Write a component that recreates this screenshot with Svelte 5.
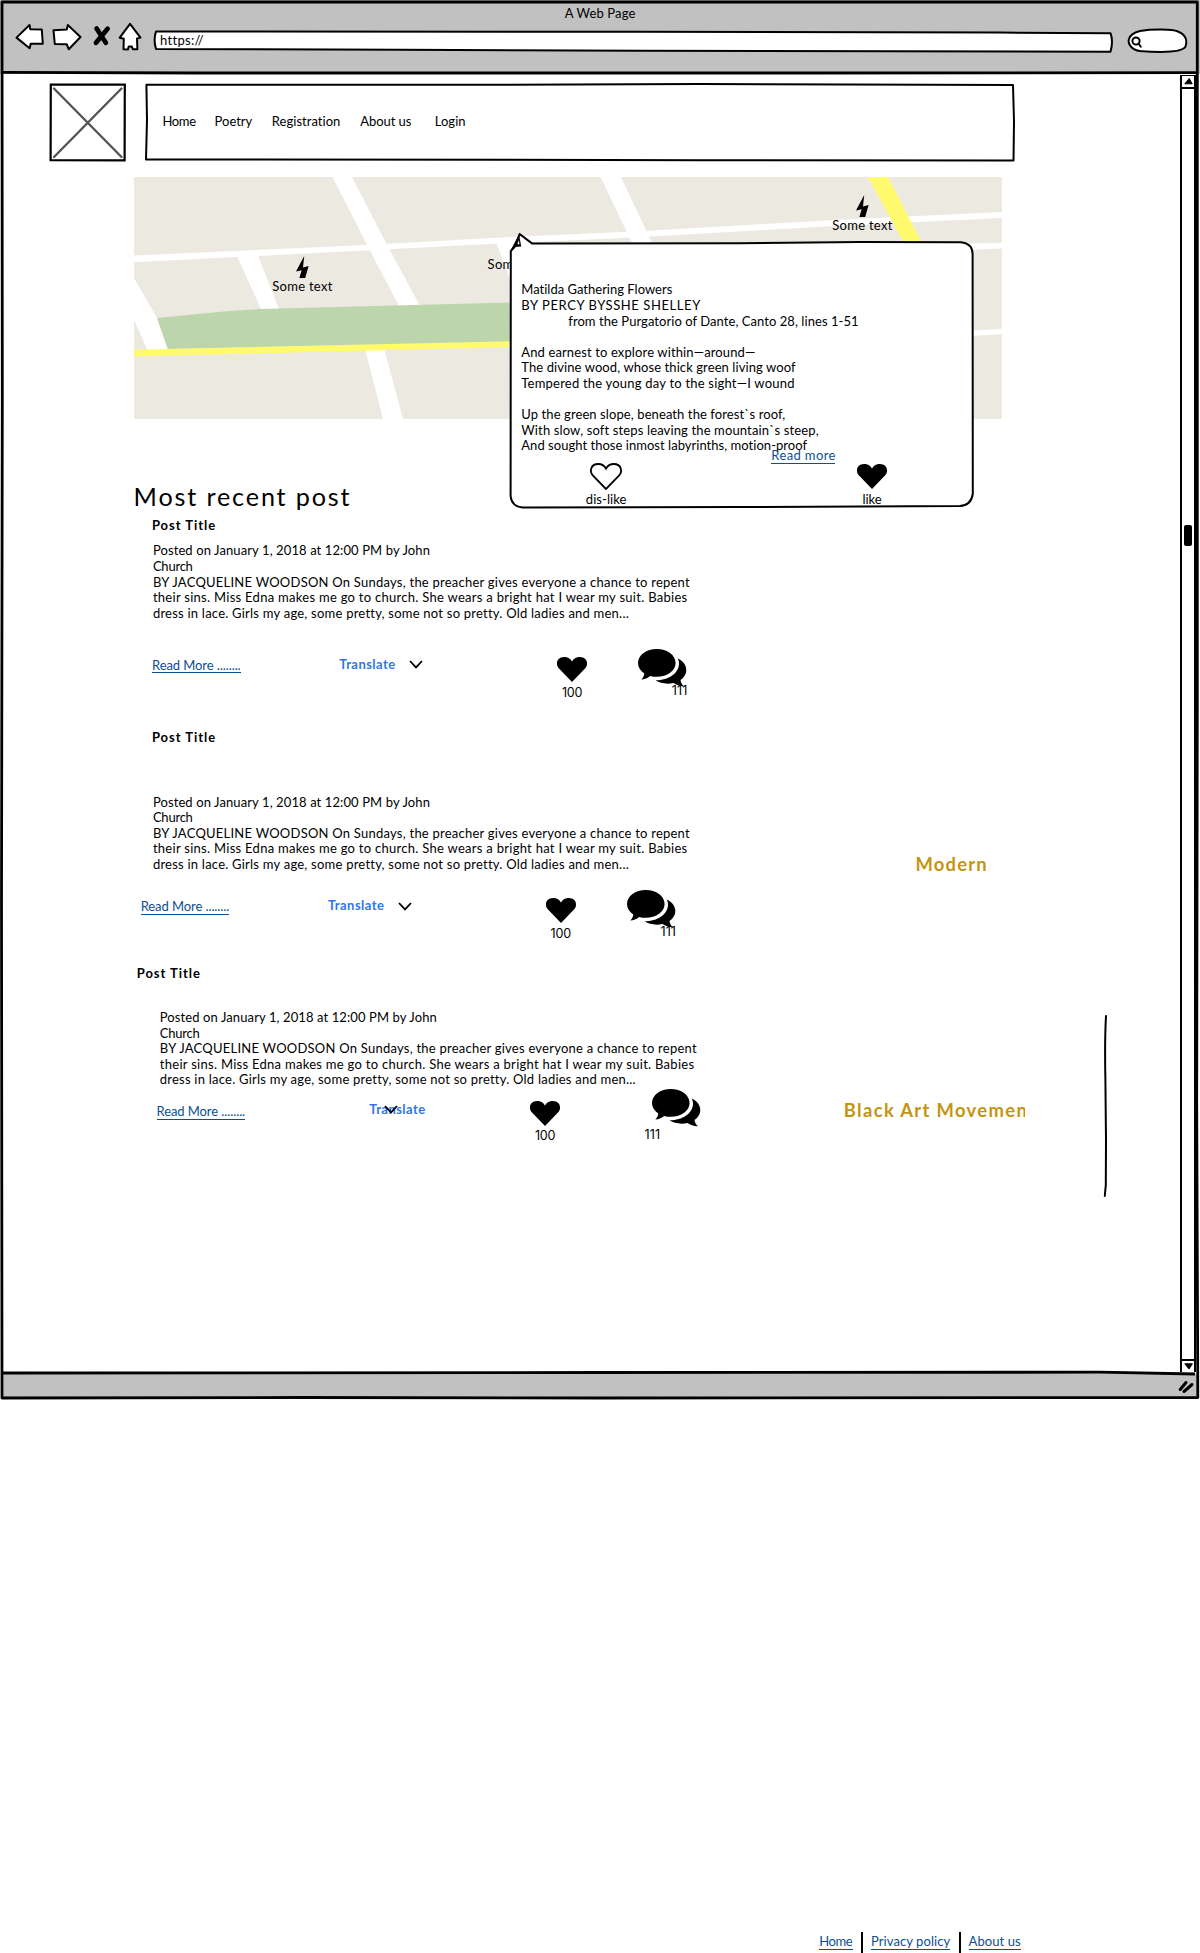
<script>
  const nav = [
    ['Home', 33.7, 'home'],
    ['Poetry', 37.7, 'poetry'],
    ['Registration', 68.7, 'registration'],
    ['About us', 51.3, 'about'],
    ['Login', 30.7, 'login'],
  ];

  const body = [
    ['Posted on January 1, 2018 at 12:00 PM by John', 277],
    ['Church', 40],
    ['BY JACQUELINE WOODSON On Sundays, the preacher gives everyone a chance to repent', 536.8],
    ['their sins. Miss Edna makes me go to church. She wears a bright hat I wear my suit. Babies', 534.3],
    ['dress in lace. Girls my age, some pretty, some not so pretty. Old ladies and men...', 475],
  ];
  const posts = ['first', 'second', 'third'];

  const poem = [
    ['Matilda Gathering Flowers', 151.2],
    ['BY PERCY BYSSHE SHELLEY', 179],
    ['from the Purgatorio of Dante, Canto 28, lines 1-51', 290.3, true],
    null,
    ['And earnest to explore within—around—', 234],
    ['The divine wood, whose thick green living woof', 274.3],
    ['Tempered the young day to the sight—I wound', 273.2],
    null,
    ['Up the green slope, beneath the forest`s roof,', 264],
    ['With slow, soft steps leaving the mountain`s steep,', 297],
    ['And sought those inmost labyrinths, motion-proof', 286],
  ];

  // Tracks a single line of text out (or in) so it spans the given width.
  function fit(node, width) {
    const natural = node.getBoundingClientRect().width;
    const gaps = node.textContent.length - 1;
    node.style.letterSpacing = `${(width - natural) / gaps}px`;
    node.style.width = `${width}px`;
  }
</script>

{#snippet line(text, width)}<span class="fit" use:fit={width}>{text}</span>{/snippet}

{#snippet heart(hollow)}
  <svg class="heart" class:hollow viewBox="0 0 32 27" width="32" height="27">
    <path d="M16 26 L3 12.6 C-.6 9 .2 1 8.3 1 C12.5 1 14.6 3.2 16 5.6 C17.4 3.2 19.5 1 23.7 1 C31.8 1 32.6 9 29 12.6Z" />
  </svg>
{/snippet}

{#snippet bolt()}
  <svg class="bolt" viewBox="0 0 13 22" width="13" height="22">
    <path d="M8.2 0 L0 15.6 L5.6 14.2 L3.4 22 L9.2 22 L12.6 10 L7 11.4Z" />
  </svg>
{/snippet}

<div class="browser">
  <header class="chrome">
    <div class="title">{@render line('A Web Page', 70.6)}</div>
    <div class="toolbar">
      <svg class="ink back" viewBox="15 22 30 32" width="30" height="32">
        <path d="M16.5 37.6 L29.5 25 L30.3 29.2 L41.8 29.5 L42.8 43.8 L30.7 43.7 L29.6 48.2Z" />
      </svg>
      <svg class="ink forward" viewBox="52 22 30 32" width="30" height="32">
        <path d="M53.5 30.3 L66.8 29.5 L67.8 25 L80.5 37 L68.8 49.3 L66.8 44.3 L54.8 44Z" />
      </svg>
      <svg class="stop" viewBox="92 22 20 32" width="20" height="32">
        <path d="M96.6 28.5 L105.8 42.7 M107.6 28.8 L96 42.8" />
      </svg>
      <svg class="ink home-icon" viewBox="117 22 26 32" width="26" height="32">
        <path d="M130 23.8 L140.5 37.6 L137 38.5 L137.4 49.3 L132.8 49.2 L131.8 46.4 L128.8 46.4 L127.8 49.6 L123.5 49.2 L123.8 38.8 L119.6 37.8Z" />
      </svg>
      <div class="address">
        <svg class="ink" viewBox="152 22 962 32" width="962" height="32">
          <path d="M156 31.4 L640 31.8 L1000 32.6 L1110.5 33.2 Q1113.5 41 1110.5 51.7 L640 50.7 L400 49.8 L156 49 Q153.2 40 156 31.4Z" />
        </svg>
        <div class="url">{@render line('https://', 43.3)}</div>
      </div>
      <svg class="ink search" viewBox="1126 22 64 32" width="64" height="32">
        <path d="M1140 31 C1152 29 1172 29 1178 31.5 C1187 35 1187 42 1185.5 46.5 C1182 53 1160 52.5 1140 51 C1131 50 1127.5 43 1129 39 C1130 35 1134 32.5 1140 31Z" />
        <circle cx="1136" cy="41" r="3.6" />
        <path d="M1138.5 43.5 L1140.8 46.8" />
      </svg>
    </div>
  </header>

  <div class="viewport">
    <main>
      <div class="masthead">
        <svg class="logo" viewBox="49 82 78 81" width="78" height="81">
          <path class="box" d="M50.8 84.5 L124.8 84.7 L124.6 160.4 L50.6 160.2Z" />
          <path class="cross" d="M54 88.5 L121.5 157 M121.5 88.5 L54 157" />
        </svg>
        <nav>
          <svg class="ink" viewBox="145 82 871 81" width="871" height="81">
            <path d="M146.4 84.7 L500 84.8 L700 84 L1013 85 L1014 122 L1013.5 160.5 L700 160.3 L500 159.8 L146 159.5 L147 120Z" />
          </svg>
          <ul>
            {#each nav as [label, width, name]}
              <li class={name}>{@render line(label, width)}</li>
            {/each}
          </ul>
        </nav>
      </div>

      <section class="map">
        <svg viewBox="0 0 868 242" width="868" height="242">
          <rect width="868" height="242" fill="#ece9e1" />
          <path class="road" d="M0 78.5 L231 68 L376 60 L500 54.5 L700 43 L868 35 L868 41 L700 49 L500 60.5 L376 66 L231 73.5 L0 85.3Z" />
          <path class="road" d="M198.5 0 L218 0 L252 66 L286 129 L265 129 L233 68Z" />
          <path class="road" d="M103 79 L123 76 L145 132 L127 132Z" />
          <path class="road" d="M0 101 L23 141 L34 174 L14 174 L0 143Z" />
          <path class="road" d="M231 172 L250 171 L269 242 L249 242Z" />
          <path class="road" d="M362 65 L381 65 L390 110 L379 110Z" />
          <path class="road" d="M466.5 0 L487 0 L519 68 L499 68Z" />
          <path class="road" d="M800 67.5 L868 65.7 L868 71.5 L800 74Z M800 156 L868 151.7 L868 157.3 L800 161Z" />
          <path fill="#bcd5ac" d="M23 141 L90 134.5 L126 132 L400 125 L400 165 L34 172Z" />
          <path class="yellow" d="M0 172.8 L400 163.8 L400 169.5 L0 179.4Z M734 0 L754 0 L789 68 L771 68Z" />
        </svg>
        <div class="pin west">{@render bolt()}{@render line('Some text', 60)}</div>
        <div class="pin mid">{@render bolt()}{@render line('Some text', 60)}</div>
        <div class="pin east">{@render bolt()}{@render line('Some text', 60)}</div>

        <article class="callout">
          <svg viewBox="508 231 468 280" width="468" height="280">
            <path class="ink-line" d="M510.8 251 L515.4 246 L519.6 234 L532.3 243.6 L740 243.2 L860 242 L961 242.3 Q972.4 243.6 972.6 254 L972.8 494 Q971 505.5 960 506 L740 507 L523 507.6 Q511.5 506.5 510.6 496Z" />
            <path d="M514.2 247 L519 234.5 L521.2 246.5Z" />
            <path fill="#fff" d="M517.4 244 L519 240 L519.4 244.4Z" />
          </svg>
          <div class="poem">
            {#each poem as row}
              <p class:indent={row?.[2]}>{#if row}{@render line(row[0], row[1])}{/if}</p>
            {/each}
            <a class="more" href="#poem">{@render line('Read more', 64.1)}</a>
            <div class="votes">
              <div class="vote">{@render heart(true)}{@render line('dis-like', 40.6)}</div>
              <div class="vote">{@render heart(false)}{@render line('like', 19)}</div>
            </div>
          </div>
        </article>
      </section>

      <div class="columns">
        <section class="feed">
          <h1>{@render line('Most recent post', 216)}</h1>
          {#each posts as post}
            <article class="post {post}">
              <h2>{@render line('Post Title', 63.3)}</h2>
              <div class="body">
                {#each body as [text, width]}<p>{@render line(text, width)}</p>{/each}
              </div>
              <div class="actions">
                <a class="read" href="#post">{@render line('Read More ........', 88.7)}</a>
                <b class="translate">{@render line('Translate', 56)}</b>
                <svg class="chevron" viewBox="0 0 14 9" width="14" height="9">
                  <path d="M1 1 L7 7.4 L13 1" />
                </svg>
                <div class="likes">{@render heart(false)}{@render line('100', 20.6)}</div>
                <div class="comments">
                  <svg viewBox="0 0 49 38" width="49" height="38">
                    <path d="M18.8 0 C29.2 0 37.6 6.2 37.6 13.9 C37.6 21.6 29.2 27.8 18.8 27.8 C16.4 27.8 14.2 27.5 12.1 26.9 C9.5 29 6.5 30.3 3.3 30.5 C5 28.8 6 26.7 6.3 24.4 C2.3 21.8 0 18.1 0 13.9 C0 6.2 8.4 0 18.8 0Z" />
                    <path d="M39.8 9.5 C45.3 12 48.3 16.5 48.3 21 C48.3 25 46.2 28.5 42.5 31 C42.8 33.5 44 35.5 46 37.3 C42 37.5 38.5 36 35.5 34 C29 35.5 22 34.3 17.5 31.3 C30 31.5 41 24.5 41 14.5 C41 12.8 40.5 11 39.8 9.5Z" />
                  </svg>
                  <div class="count">{@render line('111', 15.5)}</div>
                </div>
              </div>
            </article>
          {/each}
        </section>

        <aside>
          <div class="tag modern">{@render line('Modern', 71)}</div>
          <div class="tag movement">{@render line('Black Art Movemen', 183)}</div>
        </aside>
        <svg class="rule" viewBox="1103 1013 6 186" width="6" height="186">
          <path d="M1106 1016 Q1104.6 1040 1105.4 1080 L1106 1140 L1105.8 1185 L1104.8 1196" />
        </svg>
      </div>
    </main>

    <div class="scrollbar">
      <svg viewBox="0 0 12 11" width="12" height="11"><path d="M2.8 7.8 L10.2 7.8 L7.2 2.5Z" /></svg>
      <div class="track"><div class="thumb"></div></div>
      <svg viewBox="0 0 12 11" width="12" height="11"><path d="M2.8 2.8 L10.4 2.8 L7 8Z" /></svg>
    </div>
  </div>

  <svg class="frame" viewBox="0 0 1200 1402" width="1200" height="1402">
    <path fill="#c1c1c1" d="M2 1373 L1100 1372.5 L1197 1374 L1197 1397.5 L2 1397.5Z" />
    <path class="line" d="M2 2 L1197.3 2 L1197.3 700 L1196.7 1100 L1197.8 1397.5 L600 1398 L300 1397.5 L2 1398 L1.5 900 L2.3 400Z" />
    <path class="line" d="M2 72.4 L200 73 L800 73 L1197 72.6" />
    <path class="line" d="M2 1373 L600 1372.5 L1100 1372.2 L1195 1374" />
    <path class="grip" d="M1180.2 1389.5 L1186 1382.5 M1184 1391.5 L1192 1384.5" />
  </svg>
</div>

<footer>
  <a href="#home">{@render line('Home', 33.4)}</a>
  <a href="#privacy">{@render line('Privacy policy', 79.3)}</a>
  <a href="#about">{@render line('About us', 52)}</a>
</footer>

<style>
  :global(body) { background: #fff; overflow: hidden; }
  :global(#app) { font: 13px/15.6px Lato, sans-serif; color: #000; }
  svg { display: block; flex: none; }
  p, h1, h2, ul { margin: 0; padding: 0; font-weight: inherit; font-size: inherit; }
  ul { list-style: none; }
  a { color: #0b4f93; text-decoration: none; border-bottom: 1px solid #0b4f93; }
  .fit { display: inline-block; white-space: pre; vertical-align: top; padding-top: 1.2px; }

  .browser { display: grid; grid-template: 74px 1328px / 1200px; height: 1402px; }
  .frame { grid-area: 1 / 1 / 3 / 2; pointer-events: none; z-index: 1; }
  .line { fill: none; stroke: #000; stroke-width: 2.8; stroke-linejoin: round; }
  .grip { stroke: #000; stroke-width: 3; stroke-linecap: round; }
  .ink, .ink-line { fill: #fff; stroke: #000; stroke-width: 2; stroke-linejoin: round; stroke-linecap: round; }

  .chrome { grid-area: 1 / 1; background: #c1c1c1; padding-top: 5px; box-sizing: border-box; }
  .title { text-align: center; height: 17px; }
  .toolbar { display: flex; padding-left: 15px; }
  .forward { margin-left: 7px; }
  .stop { margin-left: 10px; fill: none; stroke: #000; stroke-width: 4.8; stroke-linecap: round; }
  .home-icon { margin-left: 5px; }
  .address { display: grid; margin-left: 9px; }
  .address > * { grid-area: 1 / 1; }
  .url { padding: 9.9px 0 0 8px; }
  .search { margin-left: 12px; }

  .viewport { grid-area: 2 / 1; display: flex; height: 1299px; }
  main { width: 1180px; flex: none; }
  .masthead { display: flex; padding: 8px 0 0 49px; gap: 18px; }
  .logo path { fill: none; stroke-linecap: round; }
  .logo .box { stroke: #000; stroke-width: 2.2; }
  .logo .cross { stroke: #555; stroke-width: 2.4; }
  nav { display: grid; }
  nav > * { grid-area: 1 / 1; }
  nav ul { display: flex; padding: 31px 0 0 17.4px; }
  .poetry { margin-left: 18.5px; }
  .registration { margin-left: 19.6px; }
  .about { margin-left: 19.6px; }
  .login { margin-left: 23.4px; }

  .map { position: relative; width: 868px; height: 242px; margin: 14px 0 0 134px; }
  .road { fill: #fff; }
  .yellow { fill: #fffa6e; }
  .pin { position: absolute; display: flex; flex-direction: column; align-items: center; width: 60px; }
  .west { left: 138.3px; top: 78.6px; }
  .mid { left: 353.6px; top: 57px; }
  .east { left: 698.3px; top: 18px; }

  .callout { position: absolute; left: 374px; top: 54px; display: grid; z-index: 2; }
  .callout > * { grid-area: 1 / 1; }
  .poem { padding: 50.2px 0 0 13.3px; }
  .poem p { height: 15.6px; }
  .poem .indent { padding-left: 47px; }
  .more { display: block; width: 64.1px; height: 16.2px; margin: -5.8px 0 0 250px; }
  .votes { display: flex; justify-content: space-between; width: 307px; margin: -1px 0 0 64.3px; }
  .vote { display: flex; flex-direction: column; align-items: center; width: 41px; }
  .vote .fit { margin-top: .6px; }
  .hollow path { fill: none; stroke: #000; stroke-width: 1.8; }

  .columns { display: flex; }
  .feed { width: 711px; flex: none; padding-left: 134px; box-sizing: content-box; }
  h1 { font-size: 25.2px; line-height: 30px; margin: 60.8px 0 0 -.4px; height: 30px; }
  h2 { font-weight: 700; height: 15.6px; }
  .post { display: flex; flex-direction: column; }
  .post h2 { margin: 6.7px 0 0 17.9px; }
  .body { margin: 10.1px 0 0 18.9px; }
  .body p { height: 15.6px; }
  .actions { display: flex; align-items: flex-start; margin: 26.8px 0 0 18px; height: 54px; }
  .read { height: 16px; margin-top: 9.5px; }
  .translate { color: #2f76e8; margin: 8.9px 0 0 98.5px; }
  .chevron { margin: 13.5px 0 0 14px; fill: none; stroke: #000; stroke-width: 1.8; }
  .likes { display: flex; flex-direction: column; align-items: center; margin: 9px 0 0 133px; }
  .likes .fit { margin-top: .7px; }
  .likes .fit, .count { font-family: Inter, sans-serif; font-size: 12.6px; }
  .comments { position: relative; margin: 2px 0 0 50px; }
  .count { position: absolute; left: 33.6px; top: 33px; }

  .second h2 { margin-top: 27.5px; }
  .second .body { margin-top: 49.4px; }
  .second .actions { margin: 16.8px 0 0 6.7px; }
  .third h2 { margin: 22.6px 0 0 2.7px; }
  .third .body { margin: 28.4px 0 0 25.8px; }
  .third .actions { margin: .1px 0 0 22.5px; }
  .third .read { margin-top: 16.2px; }
  .third .translate { margin: 14.2px 0 0 124px; }
  .third .chevron { margin: 18.5px 0 0 -41.5px; z-index: 1; }
  .third .likes { margin: 12.7px 0 0 131.5px; }
  .third .comments { margin-left: 91px; }
  .third .count { left: -7.6px; top: 36.9px; }

  aside { width: 258px; flex: none; }
  .tag { color: #c49410; font-weight: 700; font-size: 18.4px; line-height: 21.6px; height: 25px; }
  .modern { margin: 433.6px 0 0 70.6px; }
  .movement { margin: 221.6px 0 0 -1.2px; width: 181.2px; overflow: hidden; }
  .rule { margin-top: 594px; fill: none; stroke: #000; stroke-width: 2; stroke-linecap: round; }

  .scrollbar { display: flex; flex-direction: column; width: 16px; height: 1297px; margin-top: 1px; box-sizing: border-box; border: solid #000; border-width: 1px 2px 0; }
  .scrollbar path { stroke: #000; stroke-width: 1; stroke-linejoin: round; }
  .track { flex: 1; border-top: 2px solid #000; border-bottom: 2px solid #000; }
  .thumb { width: 8px; height: 21px; margin: 436px 0 0 2px; background: #000; border-radius: 2px; }

  footer { display: flex; padding-left: 819.3px; margin-top: 530px; height: 21px; }
  footer a { height: 16px; margin-top: 1.2px; }
  footer a + a { margin-left: 18.3px; }
  footer { background: linear-gradient(#000, #000) 861px 0 / 2px 21px no-repeat, linear-gradient(#000, #000) 959px 0 / 2px 21px no-repeat; }
</style>
